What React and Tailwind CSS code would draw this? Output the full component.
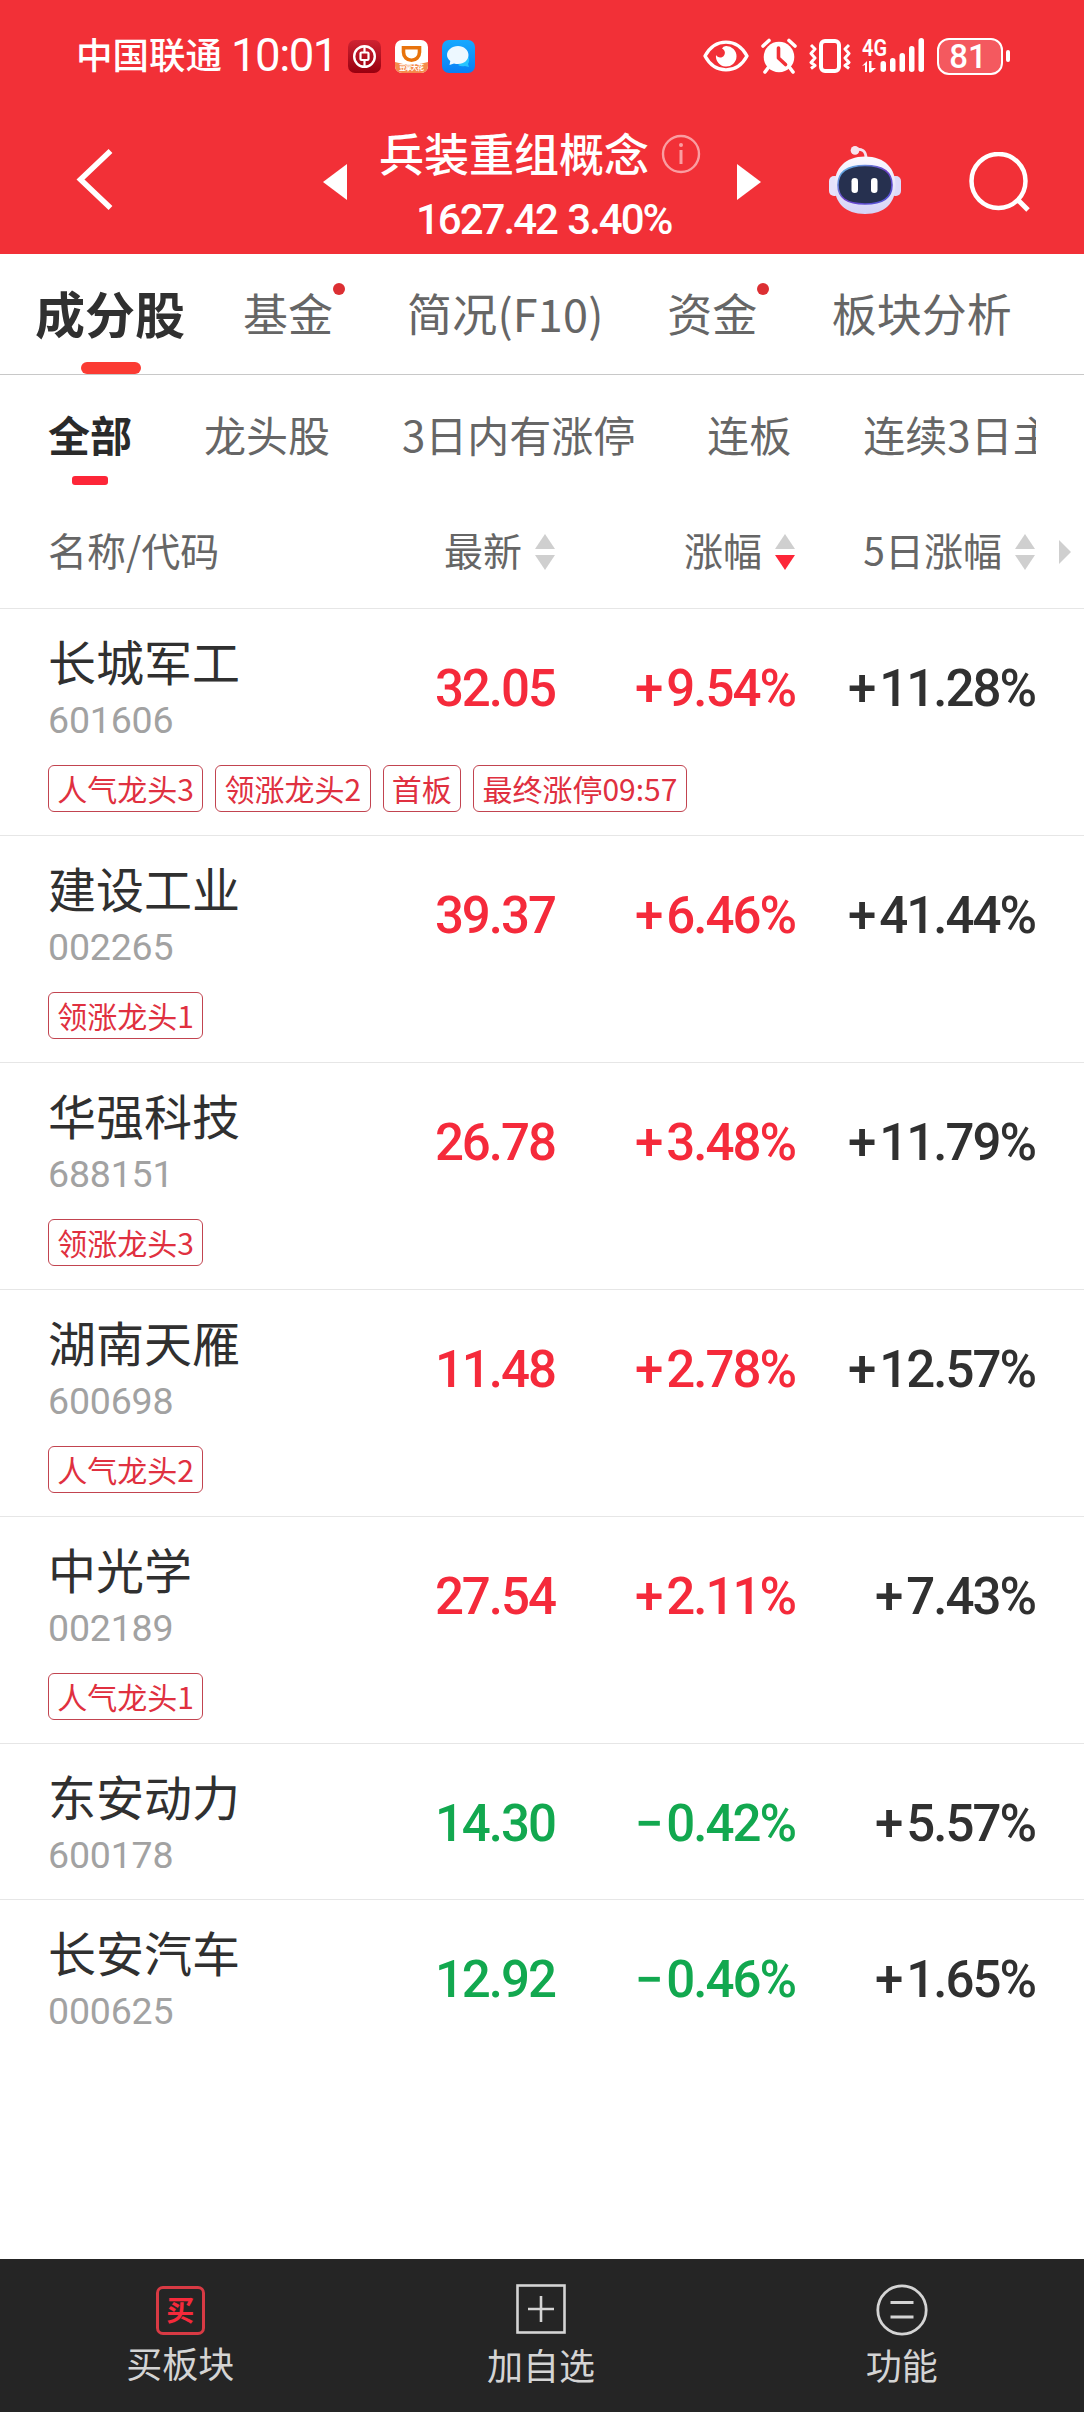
const mainTabs = [
  { label: "成分股", active: true, className: "ml-[35px]" },
  { label: "基金", dot: true, className: "ml-[58px]" },
  { label: "简况(F10)", className: "ml-[74px] tracking-[0.2px]" },
  { label: "资金", dot: true, className: "ml-[63.5px]" },
  { label: "板块分析", className: "ml-[74.5px]" },
];

const filters = ["全部", "龙头股", "3日内有涨停", "连板", "连续3日主"];

const stocks = [
  { name: "长城军工", code: "601606", price: "32.05", change: "+9.54%", week: "+11.28%", tags: ["人气龙头3", "领涨龙头2", "首板", "最终涨停09:57"] },
  { name: "建设工业", code: "002265", price: "39.37", change: "+6.46%", week: "+41.44%", tags: ["领涨龙头1"] },
  { name: "华强科技", code: "688151", price: "26.78", change: "+3.48%", week: "+11.79%", tags: ["领涨龙头3"] },
  { name: "湖南天雁", code: "600698", price: "11.48", change: "+2.78%", week: "+12.57%", tags: ["人气龙头2"] },
  { name: "中光学", code: "002189", price: "27.54", change: "+2.11%", week: "+7.43%", tags: ["人气龙头1"] },
  { name: "东安动力", code: "600178", price: "14.30", change: "−0.42%", week: "+5.57%", tags: [] },
  { name: "长安汽车", code: "000625", price: "12.92", change: "−0.46%", week: "+1.65%", tags: [] },
];

function BankIcon() {
  return (
    <svg width="33" height="33" viewBox="0 0 33 33">
      <defs>
        <linearGradient id="bank" x1="0" y1="0" x2="0" y2="1">
          <stop offset="0" stopColor="#cf2332" />
          <stop offset="1" stopColor="#98000f" />
        </linearGradient>
      </defs>
      <rect width="33" height="33" rx="7" fill="url(#bank)" />
      <circle cx="16.5" cy="16.5" r="10.3" fill="none" stroke="#fff" strokeWidth="2.4" />
      <rect x="12.5" y="12.5" width="8" height="7.5" rx="1" fill="none" stroke="#fff" strokeWidth="2.2" />
      <path d="M16.5 6v6.5M16.5 20v7" stroke="#fff" strokeWidth="2.2" />
    </svg>
  );
}

function RideIcon() {
  return (
    <svg width="33" height="33" viewBox="0 0 33 33">
      <rect width="33" height="33" rx="7" fill="#fff" />
      <path d="M0 22q16 5 33 0v4a7 7 0 0 1-7 7H7a7 7 0 0 1-7-7z" fill="#f58a4b" />
      <path d="M8.500 7.800h16v4.500a8 8 0 0 1-16 0z" fill="none" stroke="#e8730c" strokeWidth="3.600" />
      <text x="16.5" y="30" textAnchor="middle" fontSize="7" fontWeight="700" fill="#fff" textLength="25">
        豆拿大花
      </text>
    </svg>
  );
}

function ChatIcon() {
  return (
    <svg width="33" height="33" viewBox="0 0 33 33">
      <defs>
        <linearGradient id="chat" x1="0" y1="0" x2="0" y2="1">
          <stop offset="0" stopColor="#16a9ff" />
          <stop offset="1" stopColor="#087ff5" />
        </linearGradient>
      </defs>
      <rect width="33" height="33" rx="7" fill="url(#chat)" />
      <path d="M26 16c2 4 1 6 0 8l1 3-4-1q-4 1-7-1z" fill="#25c4ff" />
      <path d="M16 6c6 0 10.500 4 10.500 9s-4.500 9-10.500 9q-2 0-4-.6L7.500 25l.8-4C6.300 19.400 5 17.300 5 15c0-5 5-9 11-9z" fill="#edf8ff" />
    </svg>
  );
}

function StatusBar() {
  return (
    <div className="flex h-[112px] items-center pl-[76px] pr-[74px] text-white">
      <span className="w-[155px] pb-[3px] text-[36.5px] leading-none font-medium">中国联通</span>
      <span className="w-[117px] font-[Roboto,sans-serif] text-[45.5px] leading-none font-[450] tracking-[-1.5px]">
        10:01
      </span>
      <div className="flex gap-[14px]">
        <BankIcon />
        <RideIcon />
        <ChatIcon />
      </div>
      <div className="ml-auto flex items-center">
        {/* eye */}
        <svg width="46" height="32" viewBox="0 0 46 32" className="mr-[12px]">
          <path d="M2 16C12-2.500 34-2.500 44 16 34 34.500 12 34.500 2 16z" fill="none" stroke="#fff" strokeWidth="3.400" strokeLinejoin="round" />
          <path d="M23 6a10.300 10.300 0 1 1-10 9c1.500 3 6 3.500 8 .5S21.500 10 19 8.500Q20 6 23 6z" fill="#fff" />
        </svg>
        {/* alarm clock */}
        <svg width="36" height="36" viewBox="0 0 36 36" className="mr-[12px]">
          <circle cx="18" cy="19" r="15.300" fill="#fff" />
          <path d="M2 8l6-5.500M34 8l-6-5.500M7 30l-3 4M29 30l3 4" stroke="#fff" strokeWidth="3.600" strokeLinecap="round" />
          <path d="M17.500 10v10l7 6.500" fill="none" stroke="#f23037" strokeWidth="3.600" strokeLinecap="round" strokeLinejoin="round" />
        </svg>
        {/* vibrate */}
        <svg width="42" height="36" viewBox="0 0 42 36" className="mr-[11px]">
          <rect x="12" y="3" width="18" height="30" rx="4" fill="none" stroke="#fff" strokeWidth="4" />
          <path d="M2 7l4 4-4 4.500 4 4.500-4 4.500 4 3-4 3M40 7l-4 4 4 4.500-4 4.500 4 4.500-4 3 4 3" fill="none" stroke="#fff" strokeWidth="3" strokeLinejoin="round" />
        </svg>
        <svg width="64" height="38" viewBox="0 0 64 38" className="mr-[11px] overflow-visible" fill="#fff">
          <text x="0" y="18.500" fontFamily="Roboto" fontSize="23" fontWeight="600" textLength="25" lengthAdjust="spacingAndGlyphs">
            4G
          </text>
          <path d="M0 29l5-5v11H3v-7zM7 24h2.500v7H14l-5 4.500H7z" />
          <rect x="18.500" y="24" width="5.500" height="11" rx="2.700" />
          <rect x="28" y="21" width="5.500" height="14" rx="2.700" />
          <rect x="37.500" y="16" width="5.500" height="19" rx="2.700" />
          <rect x="47" y="9" width="5.500" height="26" rx="2.700" />
          <rect x="56.500" y="1" width="5.500" height="34" rx="2.700" />
        </svg>
        <div className="flex items-center gap-[3px]">
          <div className="flex h-[37px] w-[66px] items-center justify-center rounded-[12px] border-[2.500px] border-white bg-white/20 pr-1 font-[Roboto,sans-serif] text-[33px] leading-none font-medium">
            81
          </div>
          <div className="h-[12px] w-[4px] rounded-full bg-white" />
        </div>
      </div>
    </div>
  );
}

function RobotIcon() {
  return (
    <svg width="72" height="68" viewBox="0 0 72 68">
      <defs>
        <linearGradient id="shell" x1="0" y1="0" x2="0" y2="1">
          <stop offset="0" stopColor="#fbf9ff" />
          <stop offset="1" stopColor="#d5d2f6" />
        </linearGradient>
        <linearGradient id="rim" x1="0" y1="0" x2="1" y2="1">
          <stop offset="0" stopColor="#5fc6e8" />
          <stop offset="0.5" stopColor="#6f41c9" />
          <stop offset="1" stopColor="#4c58d8" />
        </linearGradient>
      </defs>
      <path d="M26 3.500c7-1 11 1 11 9" fill="none" stroke="#f5e4f0" strokeWidth="2.800" />
      <circle cx="26" cy="4.400" r="4.300" fill="#f8e4ee" />
      <rect x="0" y="30" width="11" height="20" rx="5" fill="#e6e3fb" />
      <rect x="61" y="30" width="11" height="20" rx="5" fill="#dcdafa" />
      <path d="M36 10.500c20 0 30.500 12 30.500 29S56 68 36 68 5.500 56.500 5.500 39.500 16 10.500 36 10.500z" fill="url(#shell)" />
      <path d="M36 19.500c19 0 27 7 27 19.500S55 58 36 58 9 51.500 9 39s8-19.500 27-19.500z" fill="#26304f" stroke="url(#rim)" strokeWidth="1.600" />
      <rect x="22.500" y="32" width="6.500" height="15" rx="3.200" fill="#fff" />
      <rect x="42" y="32" width="6.500" height="15" rx="3.200" fill="#fff" />
    </svg>
  );
}

function TitleBar() {
  return (
    <div className="flex h-[142px] pl-[76px] text-white">
      <svg width="37" height="64" viewBox="0 0 37 64" className="mt-[35px]">
        <path d="M34.500 4L4.500 32.500 34.500 61" fill="none" stroke="#fff" strokeWidth="5.500" />
      </svg>
      <svg width="24" height="36" viewBox="0 0 24 36" className="mt-[52px] ml-[210px]">
        <path d="M24 0v36L0 18z" fill="#fff" />
      </svg>
      <div className="ml-[32px] w-[330px] pt-[14px]">
        <div className="flex h-[56px] items-center">
          <span className="pb-[4px] text-[45px] leading-none font-medium">兵装重组概念</span>
          <svg width="40" height="40" viewBox="0 0 40 40" className="ml-[12px]" fill="none" stroke="#fa9da1">
            <circle cx="20" cy="20" r="18" strokeWidth="2.400" />
            <path d="M20 16v14" strokeWidth="3" />
            <circle cx="20" cy="11" r="1" strokeWidth="2" />
          </svg>
        </div>
        <div className="pt-[17px] pl-[37px] font-[Roboto,sans-serif] text-[42px] leading-[42px] font-medium tracking-[-2px] [word-spacing:2px] whitespace-nowrap">
          1627.42 3.40%
        </div>
      </div>
      <svg width="24" height="36" viewBox="0 0 24 36" className="mt-[52px] ml-[28px]">
        <path d="M0 0v36l24-18z" fill="#fff" />
      </svg>
      <div className="mt-[34px] ml-[68px]">
        <RobotIcon />
      </div>
      <svg width="62" height="62" viewBox="0 0 62 62" className="mt-[40px] ml-[68px]" fill="none" stroke="#fff">
        <circle cx="29.500" cy="29" r="27" strokeWidth="4.500" />
        <path d="M48 47l11 11" strokeWidth="5" />
      </svg>
    </div>
  );
}

function SortIcon({ desc }) {
  return (
    <svg width="20" height="36" viewBox="0 0 20 36" className="ml-[13px] shrink-0">
      <path d="M10 0l10 15H0z" fill="#cfcfcf" />
      <path d="M10 36L0 21h20z" fill={desc ? "#fd2638" : "#cfcfcf"} />
    </svg>
  );
}

function Percent({ value, className }) {
  return (
    <span className={`flex w-[240px] justify-end ${className}`}>
      <span className="mr-[5px]">{value[0]}</span>
      {value.slice(1)}
    </span>
  );
}

function StockRow({ stock }) {
  const color = stock.change.startsWith("+") ? "text-[#f52a3b]" : "text-[#12a84f]";
  return (
    <div className={`border-t border-[#e6e6e6] pl-[48px] ${stock.tags.length ? "h-[227px]" : "h-[156px]"}`}>
      <div className="flex h-[156px] pr-[48px]">
        <div className="w-[240px] pt-[25px]">
          <div className="text-[48px] leading-[52px] text-[#303030]">{stock.name}</div>
          <div className="mt-[12px] font-[Roboto,sans-serif] text-[37.500px] leading-[44px] tracking-[-0.2px] text-[#a2a2a2]">
            {stock.code}
          </div>
        </div>
        <div className="flex flex-1 pt-[54px] font-[Roboto,sans-serif] text-[51px] leading-[52px] font-medium tracking-[-2px]">
          <span className={`w-[267px] text-right ${color}`}>{stock.price}</span>
          <Percent value={stock.change} className={color} />
          <Percent value={stock.week} className="text-[#303030]" />
        </div>
      </div>
      {stock.tags.length > 0 && (
        <div className="flex gap-[12px]">
          {stock.tags.map((tag) => (
            <span
              key={tag}
              className="flex h-[47px] items-center rounded-[6px] border border-[#c24450] px-[8.300px] pb-[2px] text-[30px] leading-none whitespace-nowrap text-[#e03040]"
            >
              {tag}
            </span>
          ))}
        </div>
      )}
    </div>
  );
}

export default function App() {
  return (
    <div className="flex h-[2412px] w-[1084px] flex-col overflow-hidden bg-white font-['Noto_Sans_CJK_SC',sans-serif]">
      <header className="h-[254px] shrink-0 bg-[#f23037]">
        <StatusBar />
        <TitleBar />
      </header>

      <nav className="flex h-[121px] shrink-0 overflow-hidden border-b border-[#c8c8c8]">
        {mainTabs.map((tab) => (
          <div
            key={tab.label}
            className={`relative flex h-[120px] shrink-0 items-center pb-[3px] whitespace-nowrap ${tab.className} ${
              tab.active ? "text-[50px] font-bold text-[#303030]" : "text-[45px] text-[#666666]"
            }`}
          >
            {tab.label}
            {tab.dot && <span className="absolute top-[29px] -right-[12px] size-[12px] rounded-full bg-[#dc2f33]" />}
            {tab.active && (
              <span className="absolute bottom-0 left-[46px] h-[12px] w-[60px] rounded-full bg-[#fb3b33]" />
            )}
          </div>
        ))}
      </nav>

      <div className="mr-[48px] flex h-[121px] shrink-0 gap-[72px] overflow-hidden pl-[48px] text-[42px] text-[#666666]">
        {filters.map((label, i) => (
          <div
            key={label}
            className={`flex shrink-0 flex-col items-center whitespace-nowrap ${i === 0 ? "font-bold text-[#2a2a2a]" : ""}`}
          >
            <span className="mt-[28px] leading-[62px]">{label}</span>
            {i === 0 && <span className="mt-[11px] h-[9px] w-[36px] rounded-[3px] bg-[#fd2638]" />}
          </div>
        ))}
      </div>

      <div className="flex h-[112px] shrink-0 items-center pl-[48px] text-[39px] leading-none text-[#666666]">
        <span className="w-[240px] pb-[6px]">名称/代码</span>
        <div className="flex w-[267px] items-center justify-end">
          <span className="pb-[6px]">最新</span>
          <SortIcon />
        </div>
        <div className="flex w-[240px] items-center justify-end">
          <span className="pb-[6px]">涨幅</span>
          <SortIcon desc />
        </div>
        <div className="flex w-[240px] items-center justify-end">
          <span className="pb-[6px]">5日涨幅</span>
          <SortIcon />
        </div>
        <svg width="12" height="24" viewBox="0 0 12 24" className="ml-[24px]">
          <path d="M0 0l12 12L0 24z" fill="#cfcfcf" />
        </svg>
      </div>

      <main className="flex-1">
        {stocks.map((stock) => (
          <StockRow key={stock.code} stock={stock} />
        ))}
      </main>

      <footer className="grid h-[153px] shrink-0 grid-cols-3 bg-[#252525] pr-[2px] text-[36px] leading-[44px] text-[#d4d4d4]">
        <div className="flex flex-col items-center pt-[27px]">
          <span className="flex size-[49px] items-center justify-center rounded-[7px] border-[3px] border-[#d83a44] pb-[3px] text-[28px] leading-none font-bold text-[#f52a3b]">
            买
          </span>
          <span className="mt-[5px]">买板块</span>
        </div>
        <div className="flex flex-col items-center pt-[25px]">
          <svg width="50" height="50" viewBox="0 0 50 50" fill="none" stroke="#d4d4d4" strokeWidth="2.600">
            <rect x="1.500" y="1.500" width="47" height="47" />
            <path d="M12 25h26M25 12v26" />
          </svg>
          <span className="mt-[8px]">加自选</span>
        </div>
        <div className="flex flex-col items-center pt-[25px]">
          <svg width="52" height="52" viewBox="0 0 52 52" fill="none" stroke="#d4d4d4" strokeWidth="2.800">
            <circle cx="26" cy="26" r="24.200" />
            <path d="M14.500 18.500h23M14.500 33h23" />
          </svg>
          <span className="mt-[6px]">功能</span>
        </div>
      </footer>
    </div>
  );
}
